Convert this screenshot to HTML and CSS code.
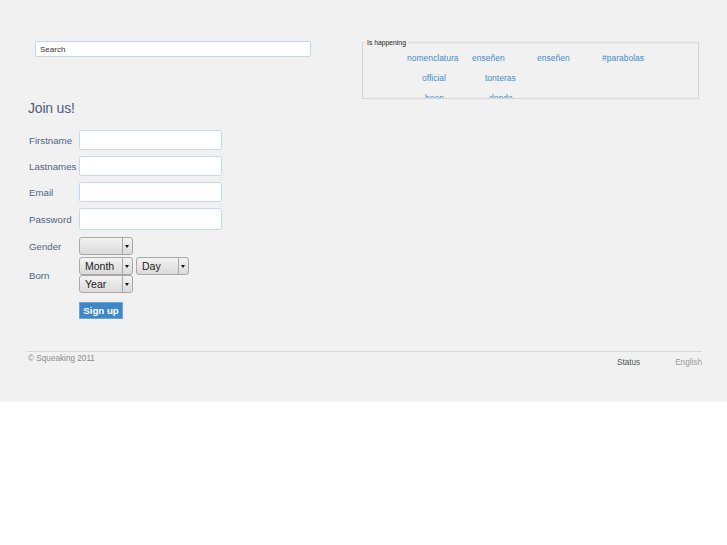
FILE: index.html
```html
<!DOCTYPE html>
<html>
<head>
<meta charset="utf-8">
<title>Squeaking</title>
<link rel="stylesheet" href="styles.css">
</head>
<body>
<div class="page">
  <div class="top">
    <div class="left">
      <div class="search"><input class="search-input" type="text" value="Search"></div>
      <h2 class="title">Join us!</h2>
      <form class="signup">
        <div class="row r-first"><label class="lbl">Firstname</label><input class="field" type="text"></div>
        <div class="row r-last"><label class="lbl">Lastnames</label><input class="field" type="text"></div>
        <div class="row r-email"><label class="lbl">Email</label><input class="field" type="text"></div>
        <div class="row r-pass"><label class="lbl">Password</label><input class="field tall" type="password"></div>
        <div class="row r-gender"><label class="lbl">Gender</label>
          <div class="select w54"><span class="val"></span><span class="arrow"></span></div>
        </div>
        <div class="row r-born"><label class="lbl">Born</label>
          <div class="selects">
            <div class="select w54"><span class="val">Month</span><span class="arrow"></span></div>
            <div class="select w53"><span class="val">Day</span><span class="arrow"></span></div>
            <div class="select w54"><span class="val">Year</span><span class="arrow"></span></div>
          </div>
        </div>
        <div class="row r-submit"><span class="lbl"></span><button class="btn" type="button">Sign up</button></div>
      </form>
    </div>
    <fieldset class="happening">
      <legend class="legend">Is happening</legend>
      <div class="tags t1"><a class="tag w65">nomenclatura</a><a class="tag w65">enseñen</a><a class="tag w65">enseñen</a><a class="tag">#parabolas</a></div>
      <div class="tags t2"><a class="tag w63">official</a><a class="tag">tonteras</a></div>
      <div class="tags t3"><a class="tag w64">boon</a><a class="tag">donde</a></div>
    </fieldset>
  </div>
  <footer class="footer">
    <div class="copy">© Squeaking 2011</div>
    <div class="links"><a class="status">Status</a><a class="lang">English</a></div>
  </footer>
</div>
</body>
</html>
```
FILE: styles.css
```css
html, body {
  margin: 0;
  padding: 0;
  background: #ffffff;
}
body {
  font-family: "Liberation Sans", Arial, sans-serif;
}
.page {
  background: #f1f1f1;
  height: 402px;
  box-sizing: border-box;
  padding: 0 25px 0 27px;
}
.top {
  display: flex;
  align-items: flex-start;
}
.left {
  width: 335px;
  flex: none;
}
.search {
  padding: 41px 0 0 8px;
}
.search-input {
  display: block;
  box-sizing: border-box;
  width: 276px;
  height: 16px;
  margin: 0;
  padding: 0 4px;
  border: 1px solid #c3d7ec;
  border-radius: 2px;
  background: #ffffff;
  box-shadow: inset 0 0 1px #d8e6f5;
  font-family: "Liberation Sans", Arial, sans-serif;
  font-size: 8px;
  color: #333333;
  outline: none;
}
.title {
  margin: 43px 0 14px 1px;
  font-size: 14px;
  line-height: 16px;
  font-weight: normal;
  color: #4a5f7e;
  letter-spacing: -0.2px;
}
.signup {
  margin: 0;
  padding-left: 2px;
}
.row {
  display: flex;
  align-items: center;
}
.r-first, .r-last, .r-email { margin-bottom: 6px; }
.r-pass { margin-bottom: 7px; }
.r-gender { margin-bottom: 2px; }
.r-born { margin-bottom: 9px; }
.lbl {
  width: 50px;
  flex: none;
  font-size: 9.7px;
  color: #4f6684;
  white-space: nowrap;
}
.field {
  display: block;
  box-sizing: border-box;
  width: 143px;
  height: 20px;
  margin: 0;
  border: 1px solid #c6daef;
  border-radius: 2px;
  background: #ffffff;
  box-shadow: inset 0 0 1px #dde9f6;
  outline: none;
}
.field.tall { height: 22px; }
.selects {
  display: flex;
  flex-wrap: wrap;
  width: 115px;
  column-gap: 3px;
}
.select {
  display: flex;
  box-sizing: border-box;
  height: 18px;
  border: 1px solid #a9a9a9;
  border-radius: 3px;
  background: linear-gradient(#f3f3f3, #dadada);
  overflow: hidden;
}
.w54 { width: 54px; }
.w53 { width: 53px; }
.select .val {
  flex: 1;
  padding-left: 5px;
  font-size: 10.5px;
  line-height: 16px;
  color: #222222;
}
.select .arrow {
  position: relative;
  width: 9px;
  flex: none;
  border-left: 1px solid #a9a9a9;
}
.select .arrow::after {
  content: "";
  position: absolute;
  left: 2px;
  top: 7px;
  border-left: 2.5px solid transparent;
  border-right: 2.5px solid transparent;
  border-top: 3px solid #111111;
}
.btn {
  box-sizing: border-box;
  width: 44px;
  height: 17px;
  margin: 0;
  padding: 0;
  border: 1px solid #6fa4d6;
  background: #3f88c8;
  color: #ffffff;
  font-family: "Liberation Sans", Arial, sans-serif;
  font-size: 9.7px;
  font-weight: bold;
  line-height: 15px;
}
.happening {
  box-sizing: border-box;
  width: 337px;
  height: 61px;
  margin: 38px 0 0 0;
  padding: 1px 0 0 0;
  border: 1px solid #d6d6d6;
  overflow: hidden;
  min-width: 0;
}
.legend {
  margin-left: 2px;
  padding: 0 2px;
  font-size: 6.8px;
  line-height: 9px;
  color: #222222;
}
.tags {
  display: flex;
  height: 20px;
  line-height: 20px;
  font-size: 8.5px;
}
.t1 { padding-left: 44px; }
.t2 { padding-left: 59px; }
.t3 { padding-left: 62px; }
.tag {
  color: #3c8ed0;
  white-space: nowrap;
}
.w65 { width: 65px; }
.w63 { width: 63px; }
.w64 { width: 64px; }
.footer {
  margin-top: 32px;
  border-top: 1px solid #d8d8d8;
  display: flex;
  justify-content: space-between;
  align-items: flex-start;
}
.copy {
  padding: 2px 0 0 1px;
  font-size: 8.2px;
  color: #8a8a8a;
}
.links {
  display: flex;
  padding: 6px 0 0 0;
  font-size: 8.2px;
}
.status {
  color: #555555;
  margin-right: 35px;
}
.lang {
  color: #999999;
}
```
